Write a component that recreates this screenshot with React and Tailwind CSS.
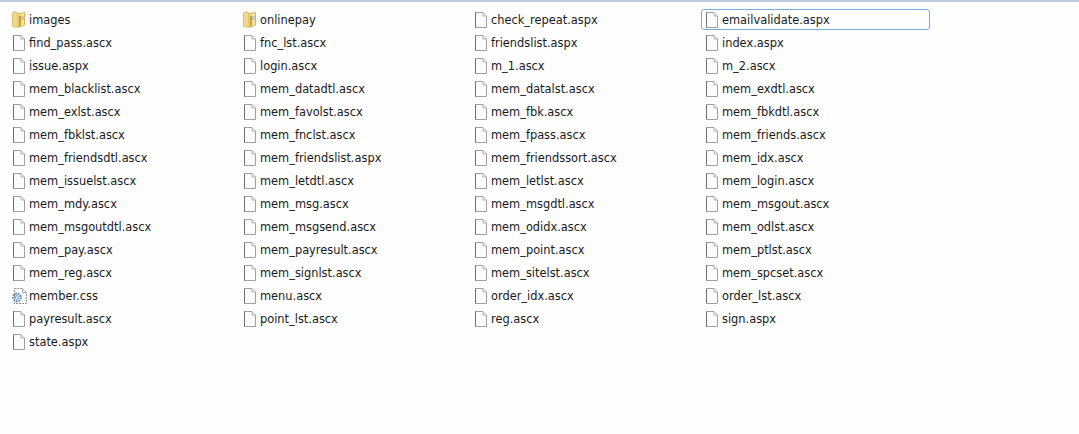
const files = [
  ["images", "folder"], ["onlinepay", "folder"], ["check_repeat.aspx"], ["emailvalidate.aspx", "selected"],
  ["find_pass.ascx"], ["fnc_lst.ascx"], ["friendslist.aspx"], ["index.aspx"],
  ["issue.aspx"], ["login.ascx"], ["m_1.ascx"], ["m_2.ascx"],
  ["mem_blacklist.ascx"], ["mem_datadtl.ascx"], ["mem_datalst.ascx"], ["mem_exdtl.ascx"],
  ["mem_exlst.ascx"], ["mem_favolst.ascx"], ["mem_fbk.ascx"], ["mem_fbkdtl.ascx"],
  ["mem_fbklst.ascx"], ["mem_fnclst.ascx"], ["mem_fpass.ascx"], ["mem_friends.ascx"],
  ["mem_friendsdtl.ascx"], ["mem_friendslist.aspx"], ["mem_friendssort.ascx"], ["mem_idx.ascx"],
  ["mem_issuelst.ascx"], ["mem_letdtl.ascx"], ["mem_letlst.ascx"], ["mem_login.ascx"],
  ["mem_mdy.ascx"], ["mem_msg.ascx"], ["mem_msgdtl.ascx"], ["mem_msgout.ascx"],
  ["mem_msgoutdtl.ascx"], ["mem_msgsend.ascx"], ["mem_odidx.ascx"], ["mem_odlst.ascx"],
  ["mem_pay.ascx"], ["mem_payresult.ascx"], ["mem_point.ascx"], ["mem_ptlst.ascx"],
  ["mem_reg.ascx"], ["mem_signlst.ascx"], ["mem_sitelst.ascx"], ["mem_spcset.ascx"],
  ["member.css", "css"], ["menu.ascx"], ["order_idx.ascx"], ["order_lst.ascx"],
  ["payresult.ascx"], ["point_lst.ascx"], ["reg.ascx"], ["sign.aspx"],
  ["state.aspx"],
];

const PageIcon = () => (
  <svg width="12" height="16" viewBox="0 0 12 16" className="shrink-0 ml-[1px] mt-[1px]">
    <path d="M0.5 0.5H8L11.5 4V15.5H0.5Z" fill="#fcfcfc" stroke="#a0a0a0" />
    <path d="M0.5 15.5V0.5" stroke="#707070" />
    <path d="M8 0.5V4H11.5" fill="#e8e8e8" stroke="#b4b4b4" />
  </svg>
);

const FolderIcon = () => (
  <svg width="13" height="17" viewBox="0 0 13 17" className="shrink-0">
    <path d="M0.5 2.5C0.5 1.5 1 1 2 1H4.5L5.5 2.5H7V15.5L2 16C1 16 0.5 15.5 0.5 14.5Z" fill="#f0d98a" stroke="#dcbc66" />
    <path d="M6 3L12.5 1.5V14L6 16.5Z" fill="#f6e6a6" stroke="#d6b356" />
    <path d="M7 5L9 4.5V14.5L7 15.2Z" fill="#c9a03c" />
    <path d="M9 5H12V9H9Z" fill="#8fb0d0" opacity="0.5" />
  </svg>
);

const CssIcon = () => (
  <svg width="15" height="16" viewBox="0 0 15 16" className="shrink-0 mt-[1px]">
    <path d="M2.5 0.5H10.5L14.5 4.5V15.5H2.5Z" fill="#fdfdfd" stroke="#8c8c8c" strokeDasharray="2 1" />
    <path d="M10.5 0.5V4.5H14.5" fill="#eeeeee" stroke="#a8a8a8" />
    <circle cx="5" cy="9.5" r="3.8" fill="none" stroke="#5f86b8" strokeWidth="2.2" strokeDasharray="1.6 1" />
    <circle cx="5" cy="9.5" r="2.4" fill="#9db6d3" />
    <circle cx="5" cy="9.5" r="1" fill="#ffffff" />
  </svg>
);

const FileRow = ({ name, kind }) => (
  <div
    className={
      "h-[21px] flex items-center gap-[4px] pl-[3px] rounded-[3px] border " +
      (kind === "selected" ? "border-[#7fabde]" : "border-transparent")
    }
  >
    <span className="w-[13px] flex justify-start">
      {kind === "folder" ? <FolderIcon /> : kind === "css" ? <CssIcon /> : <PageIcon />}
    </span>
    <span className="text-[11.4px] leading-[13px] pt-[1px] text-[#1a1a1a] whitespace-nowrap">{name}</span>
  </div>
);

export default function App() {
  return (
    <div
      className="w-[1079px] h-[434px] overflow-hidden bg-[#fefefe] border-t-2 border-[#b9cde6]"
      style={{ fontFamily: '"DejaVu Sans", sans-serif' }}
    >
      <div className="grid grid-cols-[229px_229px_229px_229px] gap-x-[2px] gap-y-[2px] pl-[8px] pt-[7px]">
        {files.map(([name, kind]) => (
          <FileRow key={name} name={name} kind={kind} />
        ))}
      </div>
    </div>
  );
}
